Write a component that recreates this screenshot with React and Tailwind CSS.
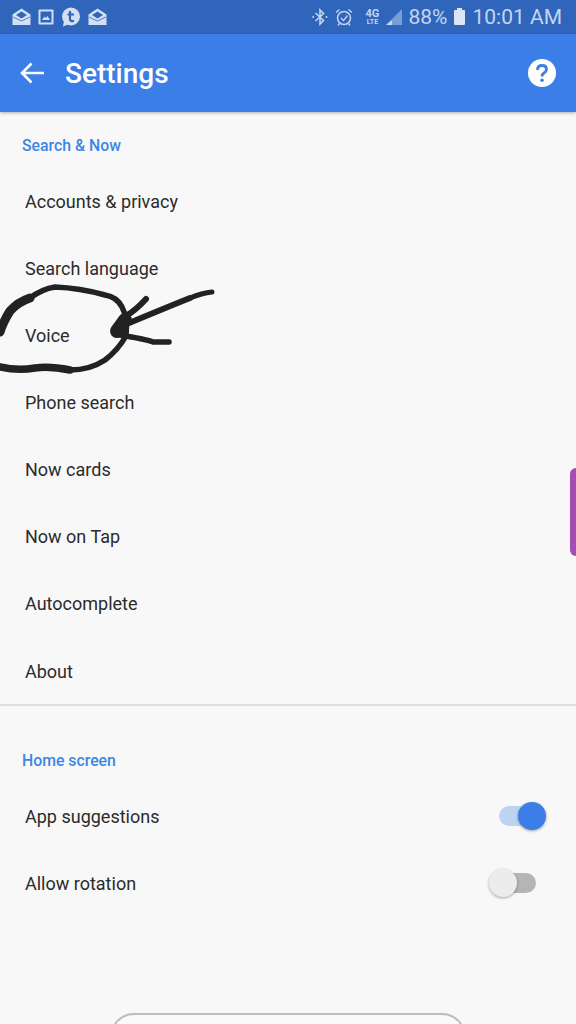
const searchItems = [
  'Accounts & privacy',
  'Search language',
  'Voice',
  'Phone search',
  'Now cards',
  'Now on Tap',
  'Autocomplete',
  'About',
];

const MailIcon = () => (
  <svg width="19" height="18" viewBox="0 0 19 18" className="text-[#d3e0f3]">
    <path d="M9.5 0.5 L18.5 6.5 V17 H0.5 V6.5 Z" fill="currentColor" />
    <path d="M4 7 L9.5 3.5 L15 7 L9.5 10.5 Z" fill="#2f66bb" />
    <path d="M1 9 L9.5 13 L18 9" fill="none" stroke="#2f66bb" strokeWidth="0.8" />
  </svg>
);

const StatusBar = () => (
  <div className="h-[34px] bg-[#2f66bb] flex items-center pl-3 pr-[14px]">
    <div className="flex items-center gap-[7px]">
      <MailIcon />
      <svg width="16" height="16" viewBox="0 0 16 16" className="text-[#d3e0f3]">
        <rect x="0.5" y="0.5" width="15" height="15" rx="1" fill="currentColor" />
        <rect x="2.5" y="2.5" width="11" height="11" fill="#2f66bb" />
        <path d="M4 11 L6.5 7.5 L8 9 L9.5 7 L12 11 Z" fill="currentColor" />
      </svg>
      <svg width="20" height="20" viewBox="0 0 20 20" className="text-[#d3e0f3]">
        <circle cx="10" cy="9.5" r="9" fill="currentColor" />
        <path d="M3 14 L2 19.5 L8 17 Z" fill="currentColor" />
        <path d="M9 4 V12.5 Q9 14.5 13 14 M6.5 7.5 H13" fill="none" stroke="#2f66bb" strokeWidth="2.2" />
      </svg>
      <MailIcon />
    </div>
    <div className="ml-auto flex items-center text-[#c3d5f0]">
      <svg width="16" height="18" viewBox="0 0 16 18">
        <path d="M3.5 5 L11.5 12.5 L8 16 V2 L11.5 5.5 L3.5 13" fill="none" stroke="currentColor" strokeWidth="1.6" />
        <circle cx="1.2" cy="9" r="1" fill="currentColor" />
        <circle cx="14.5" cy="9" r="1" fill="currentColor" />
      </svg>
      <svg width="18" height="18" viewBox="0 0 18 18" className="ml-[7px]">
        <circle cx="9" cy="10" r="6.5" fill="none" stroke="currentColor" strokeWidth="1.5" />
        <path d="M6 10 L8.5 12.5 L12.5 7.5" fill="none" stroke="currentColor" strokeWidth="1.3" />
        <path d="M1 4.5 L4.5 1.5 M17 4.5 L13.5 1.5 M4.5 15.5 L3 17.5 M13.5 15.5 L15 17.5" fill="none" stroke="currentColor" strokeWidth="1.4" />
      </svg>
      <div className="ml-[9px] w-[20px] flex flex-col items-center font-bold leading-none">
        <span className="text-[11px] h-[10px]">4G</span>
        <span className="text-[7px] mt-px">LTE</span>
      </div>
      <svg width="18" height="18" viewBox="0 0 18 18" className="ml-[3px]">
        <path d="M17 1 V17 H1 Z" fill="currentColor" opacity="0.5" />
        <path d="M1 17 H7 V12 Z" fill="currentColor" />
      </svg>
      <span className="ml-[5px] text-[21px] leading-none">88%</span>
      <div className="ml-[7px] w-[11px] h-[15px] bg-[#dbe5f5] rounded-[1px] relative">
        <div className="absolute -top-[2px] left-[3px] w-[5px] h-[2px] bg-[#dbe5f5]" />
      </div>
      <span className="ml-[7px] text-[21px] leading-none">10:01 AM</span>
    </div>
  </div>
);

const AppBar = () => (
  <div className="relative z-10 h-[78px] bg-[#3b7ee8] flex items-center px-[20px] text-white shadow-[0_1px_3px_rgba(0,0,0,0.3)]">
    <svg width="25" height="22" viewBox="0 0 25 22">
      <path d="M24 11 H2 M11.5 1.5 L2 11 L11.5 20.5" fill="none" stroke="currentColor" strokeWidth="2.6" />
    </svg>
    <h1 className="ml-[20px] text-[28px] font-medium leading-none pt-[2px]">Settings</h1>
    <svg width="28" height="28" viewBox="0 0 28 28" className="ml-auto">
      <circle cx="14" cy="14" r="14" fill="#fff" />
      <path d="M9.5 11 Q9.5 6.5 14 6.5 Q18.5 6.5 18.5 10.5 Q18.5 12.5 16 14 Q14 15.3 14 17.5" fill="none" stroke="#3b7ee8" strokeWidth="2.8" />
      <circle cx="14" cy="21.2" r="1.8" fill="#3b7ee8" />
    </svg>
  </div>
);

const Row = ({ label, children }) => (
  <div className="h-[67.15px] pt-px flex items-center pl-[25px] pr-[30px] text-[18px] text-[#2b2b2b]">
    <span>{label}</span>
    {children}
  </div>
);

const Toggle = ({ on }) => (
  <div className="ml-auto relative w-[57px] h-[28px] flex items-center">
    <div className={on ? 'ml-[10px] w-[37px] h-[20px] rounded-full bg-[#bcd3f3]' : 'ml-[10px] w-[37px] h-[20px] rounded-full bg-[#b5b5b5]'} />
    {on ? (
      <div className="absolute right-0 top-0 w-[28px] h-[28px] rounded-full bg-[#3b7ee8] shadow-[0_1px_3px_rgba(0,0,0,0.35)]" />
    ) : (
      <div className="absolute left-0 top-0 w-[28px] h-[28px] rounded-full bg-[#ececec] shadow-[0_1px_3px_rgba(0,0,0,0.35)]" />
    )}
  </div>
);

const Scribble = () => (
  <svg width="220" height="100" viewBox="0 280 220 100" className="absolute left-0 top-[280px] text-[#222]" fill="none" stroke="currentColor" strokeLinecap="round" strokeLinejoin="round">
    <path d="M0 332 Q3 322 10 311 Q18 302 30 298" strokeWidth="9" />
    <path d="M30 298 Q42 289 55 287 Q80 288 105 295 Q117 297 122 307 Q128 318 126 336 Q118 350 105 360 Q90 370 70 370" strokeWidth="5.5" />
    <path d="M70 370 Q50 366 35 368 Q18 371 0 367" strokeWidth="7.5" />
    <path d="M117 331 L125 320" strokeWidth="14" />
    <path d="M122 326 Q165 308 190 298" strokeWidth="6" />
    <path d="M190 298 Q202 293 212 292" strokeWidth="5" />
    <path d="M126 316 Q136 310 146 299" strokeWidth="6" />
    <path d="M120 335 Q145 339 153 342 L169 342" strokeWidth="5.5" />
  </svg>
);

export default function App() {
  return (
    <div className="relative w-[576px] h-[1024px] overflow-hidden bg-[#f8f8f8] font-['Roboto',sans-serif]">
      <StatusBar />
      <AppBar />

      <div className="h-[55px] pt-[25px] pl-[22px] text-[15.8px] leading-[18px] font-medium text-[#3b86e4]">Search &amp; Now</div>
      {searchItems.map((item) => (
        <Row key={item} label={item} />
      ))}

      <div className="h-[2px] bg-[#dedede]" />

      <div className="h-[76px] pt-[46px] pl-[22px] text-[15.8px] leading-[18px] font-medium text-[#3b86e4]">Home screen</div>
      <Row label="App suggestions">
        <Toggle on />
      </Row>
      <Row label="Allow rotation">
        <Toggle />
      </Row>

      {/* hand drawn marks and things lying over the page */}
      <Scribble />
      <div className="absolute right-0 top-[468px] w-[6px] h-[88px] rounded-l-[6px] bg-[#a44db5]" />
      <div className="absolute left-[110px] top-[1013px] w-[356px] h-[40px] rounded-t-[24px] border-2 border-[#bdbdbd] bg-[#fafafa]" />
    </div>
  );
}
